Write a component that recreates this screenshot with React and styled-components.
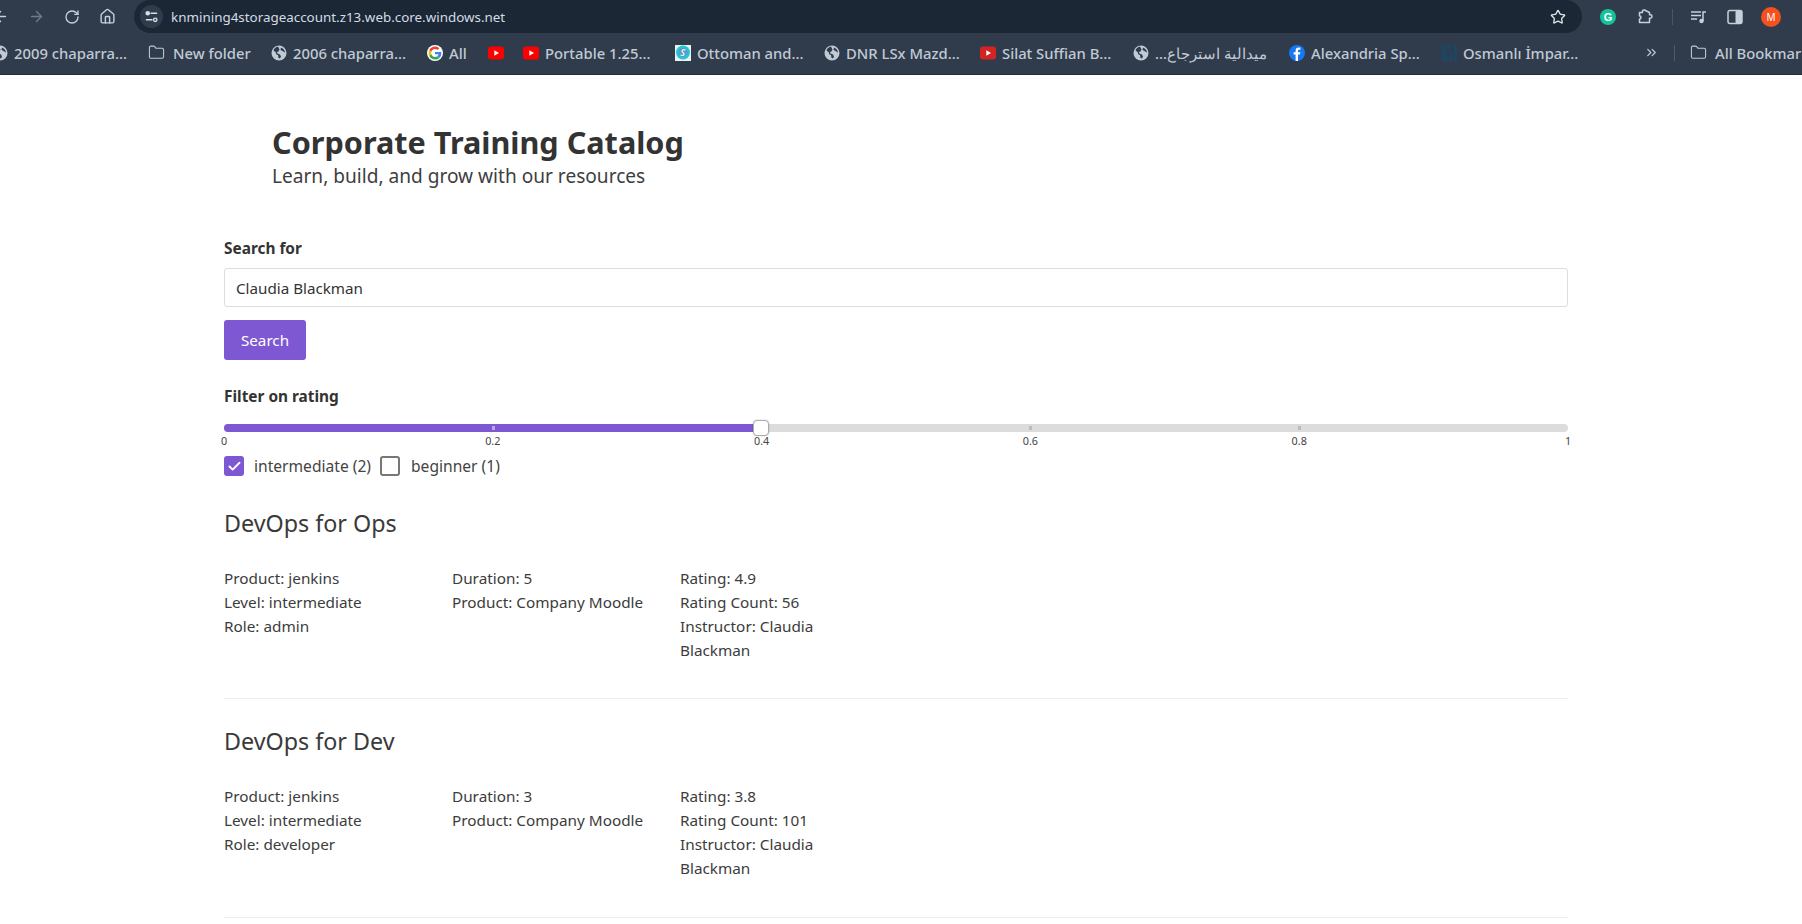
import React from "react";
import styled, { createGlobalStyle } from "styled-components";
import { ArrowLeft, ArrowRight, RotateCw, Home, Star, Folder, ChevronsRight, Check } from "lucide-react";

const Global = createGlobalStyle`
  html, body { margin: 0; padding: 0; background: #fff; }
  body { font-family: "Noto Sans", "Open Sans", sans-serif; color: #333; overflow: hidden; }
  * { box-sizing: border-box; }
`;

const Page = styled.div`width: 1802px; height: 924px; overflow: hidden;`;
const Toolbar = styled.div`
  height: 33px; background: #303c4c; display: flex; align-items: flex-start; color: #c6d0db;
`;
const NavIcons = styled.div`display: flex; align-items: center; gap: 19px; height: 33px; width: 142px; margin-left: -8px; flex: none;`;
const NavButton = styled.span`display: flex; color: ${p => p.$dim ? "#6f7a87" : "#c6d0db"};`;
const AddressBar = styled.div`
  width: 1448px; height: 33px; background: #1b2735; display: flex; align-items: center; flex: none;
  border-radius: 17px; padding-right: 16px;
`;
const SiteIcon = styled.span`
  width: 23px; height: 23px; border-radius: 50%; background: #303c4c; margin: 0 8px 0 6px; display: flex; align-items: center; justify-content: center; color: #d8dfe6;
`;
const Url = styled.span`font: 13.400px "Noto Sans", sans-serif; color: #d3dce5; flex: 1;`;
const ToolIcons = styled.div`display: flex; align-items: center; height: 33px; flex: 1; padding-left: 18px; color: #c6d0db;`;
const GrammarlyBadge = styled.span`
  width: 16px; height: 16px; border-radius: 50%; background: #15c39a; color: #fff; font: bold 11px "Liberation Sans", sans-serif;
  display: flex; align-items: center; justify-content: center; margin-right: 21px;
`;
const ToolDivider = styled.span`width: 1px; height: 16px; background: #4b5665; margin: 0 18px 0 18px;`;
const PanelSlot = styled.span`display: flex; margin: 0 18px 0 20px;`;
const Avatar = styled.span`
  width: 20px; height: 20px; border-radius: 50%; background: #f4511e; color: #fff; font: 10px "Noto Sans", sans-serif;
  display: flex; align-items: center; justify-content: center;
`;
const Bookmarks = styled.div`
  height: 42px; background: #303c4c; display: flex; align-items: center; overflow: hidden; padding-bottom: 2px; border-bottom: 1px solid #262c35;
`;
const BookmarkRow = styled.div`display: flex; align-items: center; margin-left: -8px;`;
const Bookmark = styled.div`
  width: ${p => p.$w}px; flex: none; display: flex; align-items: center; gap: ${p => p.$gap ?? 6}px; color: #c0cad5; font: 500 14.800px "Noto Sans", sans-serif; white-space: nowrap; overflow: hidden;
`;
const BookmarkDivider = styled.span`width: 1px; height: 16px; background: #505b6a; margin-right: 15px; flex: none;`;

const Main = styled.main`width: 1344px; margin-left: 224px;`;
const Hero = styled.header`padding: 49px 0 0 48px; height: 147px;`;
const Title = styled.h1`margin: 0 0 3px; font: 700 30.600px/36px "Noto Sans", sans-serif; color: #333;`;
const Subtitle = styled.p`margin: 0; font: 400 19.100px/26px "Noto Sans", sans-serif; color: #3e3e3e;`;
const FieldLabel = styled.label`display: block; font: 700 15.400px/24px "Noto Sans", sans-serif; color: #333;`;
const SearchBlock = styled.section`padding-top: 15px;`;
const SearchInput = styled.input`
  display: block; width: 100%; height: 39px; margin-top: 7px; border: 1px solid #ddd; border-radius: 3px; padding: 0 11px;
  font: 15.200px "Noto Sans", sans-serif; color: #333; background: #fff; outline: none;
`;
const SearchButton = styled.button`
  display: block; width: 82px; height: 40px; margin-top: 13px; border: 0; border-radius: 3px; background: #7e57d3; color: #fff;
  font: 15.200px "Noto Sans", sans-serif;
`;
const FilterBlock = styled.section`padding-top: 25px;`;
const SliderWrap = styled.div`position: relative; height: 38px; margin-top: 7px;`;
const Track = styled.div`position: absolute; left: 0; right: 0; top: 8px; height: 8px; border-radius: 4px; background: #dcdcdc;`;
const Fill = styled.div`position: absolute; left: 0; top: 8px; height: 8px; border-radius: 4px 0 0 4px; background: #7e57d3;`;
const Dot = styled.span`position: absolute; top: 10px; width: 3px; height: 4px; margin-left: -1px; background: ${p => p.$c};`;
const Handle = styled.span`
  position: absolute; top: 4px; width: 16px; height: 16px; margin-left: -9px; border-radius: 4px; background: #fff; border: 1px solid #aaa; box-shadow: 0 0 2px rgba(0,0,0,.2);
`;
const Tick = styled.span`
  position: absolute; top: 18px; font: 10.800px/13px "Noto Sans", sans-serif; color: #444; transform: translateX(-50%);
`;
const Checks = styled.div`display: flex; align-items: center; height: 24px; font: 15.600px/24px "Noto Sans", sans-serif; color: #444;`;
const CheckBox = styled.span`
  width: 20px; height: 20px; flex: none; border-radius: 3px; display: flex; align-items: center; justify-content: center; color: #fff;
  background: ${p => p.$on ? "#7e57d3" : "#fff"}; border: ${p => p.$on ? "0" : "2px solid #777"}; margin-right: ${p => p.$gap}px;
`;
const CheckLabel = styled.span`margin-right: 9px;`;
const Result = styled.article`
  height: ${p => p.$h}px; padding-top: ${p => p.$pad}px; border-bottom: 1px solid #eee;
`;
const ResultTitle = styled.h2`margin: 0 0 27px; font: 400 23.300px/32px "Noto Sans", sans-serif; color: #3a3a3a;`;
const Columns = styled.div`display: grid; grid-template-columns: repeat(3, 228px);`;
const Column = styled.div`padding-right: 32px; font: 15.300px/24px "Noto Sans", sans-serif; color: #3c3c3c;`;
const Line = styled.div``;

const TuneIcon = () => (
  <svg width="15" height="15" viewBox="0 0 16 16" fill="none" stroke="currentColor" strokeWidth="1.500">
    <circle cx="4" cy="4.500" r="1.700" fill="currentColor" />
    <path d="M7 4.500h7M2 11.500h7" />
    <circle cx="12" cy="11.500" r="1.800" />
  </svg>
);
const GlobeIcon = () => (
  <svg width="16" height="16" viewBox="0 0 16 16">
    <circle cx="8" cy="8" r="7.500" fill="#c0cad5" />
    <path d="M7 1.500C5 2 3 3.500 2.500 5.500l2 1.500 1 2.500 1.500.5.500 3 1.500.5 1-2-1-2-2.500-1-.5-1.500 1.500-.5 1-2zM10 2.500l-.5 2.500 2 1 1.500 1 1 .5c0-2-1.500-4-4-5z" fill="#303c4c" />
  </svg>
);
const PuzzleIcon = () => (
  <svg width="17" height="17" viewBox="0 0 17 17" fill="none" stroke="currentColor" strokeWidth="1.500" strokeLinejoin="round">
    <path d="M2.500 4.500H5.500V3a1.500 1.500 0 0 1 2-1l5 2.500v2.300h.8a1.700 1.700 0 0 1 0 3.400h-.8v4.300H2.500v-3.500c1.200 0 1.500-.8 1.500-1.500S3.700 8 2.500 8z" />
  </svg>
);
const QueueIcon = () => (
  <svg width="16" height="16" viewBox="0 0 16 16" fill="none" stroke="currentColor" strokeWidth="1.500">
    <path d="M0 3h10M0 6.500h10M0 10h6" />
    <circle cx="10.500" cy="12" r="2.200" fill="currentColor" stroke="none" />
    <path d="M12 12V3h3" />
  </svg>
);
const SidePanelIcon = () => (
  <svg width="16" height="16" viewBox="0 0 16 16">
    <rect x="1" y="1.500" width="14" height="13" rx="2" fill="none" stroke="currentColor" strokeWidth="1.500" />
    <rect x="8.500" y="1.500" width="6.500" height="13" rx="1.500" fill="currentColor" />
  </svg>
);
const GoogleIcon = () => (
  <svg width="16" height="16" viewBox="0 0 48 48">
    <circle cx="24" cy="24" r="24" fill="#fff" />
    <path fill="#EA4335" d="M24 12c3 0 5.500 1 7.500 3l5.500-5.500C33.700 6.300 29.200 4.500 24 4.500 16.500 4.500 10 8.800 6.800 15l6.400 5C14.700 15.300 19 12 24 12z" />
    <path fill="#4285F4" d="M43 24.400c0-1.300-.1-2.500-.3-3.700H24v7.400h10.700c-.5 2.400-1.800 4.400-3.800 5.800l6.200 4.800C40.700 35.400 43 30.400 43 24.400z" />
    <path fill="#FBBC05" d="M13.200 28c-.4-1.200-.6-2.600-.6-4s.2-2.800.6-4l-6.400-5C5.400 17.700 4.700 20.800 4.700 24s.7 6.300 2.100 9z" />
    <path fill="#34A853" d="M24 43.500c5.200 0 9.600-1.700 12.900-4.700l-6.200-4.800c-1.700 1.200-4 1.900-6.700 1.900-5 0-9.300-3.300-10.800-8l-6.400 5C10 39.200 16.500 43.500 24 43.500z" />
  </svg>
);
const YouTubeIcon = ({ dark }) => (
  <svg width="16" height="16" viewBox="0 0 16 16">
    <rect x="0" y="1.500" width="16" height="13" rx="3" fill={dark ? "#d32424" : "#f00"} />
    <path d="M6.300 5.300 11 8l-4.700 2.700z" fill="#fff" />
  </svg>
);
const OttomanIcon = () => (
  <svg width="16" height="16" viewBox="0 0 16 16">
    <rect width="16" height="16" fill="#e8f4ee" />
    <circle cx="8" cy="7.500" r="7" fill="#23c6d6" />
    <circle cx="8" cy="7.500" r="4.600" fill="#5a9bc9" />
    <path d="M10.500 5.200C8 4 5.700 5.500 8 7.500s.5 3.700-2.500 2.500" stroke="#e8f4ee" strokeWidth="1.300" fill="none" />
  </svg>
);
const FacebookIcon = () => (
  <svg width="16" height="16" viewBox="0 0 16 16">
    <circle cx="8" cy="8" r="8" fill="#1877f2" />
    <path d="M9 16V9.500h2l.4-2.300H9V6c0-.7.300-1.200 1.300-1.200h1.100V2.800C11 2.700 10.400 2.600 9.700 2.600 7.800 2.600 6.600 3.800 6.600 5.700v1.500H4.600v2.300h2V16z" fill="#fff" />
  </svg>
);
const OsmanliIcon = () => (
  <svg width="16" height="16" viewBox="0 0 16 16">
    <rect width="16" height="16" fill="#1f4560" />
    <path d="M5 1 8 12l1-6 3-5v14" stroke="#2f3c4c" strokeWidth="1.600" fill="none" />
  </svg>
);

const courses = [
  { title: "DevOps for Ops", role: "admin", duration: 5, rating: 4.9, count: 56, h: 221, pad: 29 },
  { title: "DevOps for Dev", role: "developer", duration: 3, rating: 3.8, count: 101, h: 219, pad: 26 },
];

const ticks = [0, 0.2, 0.4, 0.6, 0.8, 1];

export default function App() {
  return (
    <Page>
      <Global />
      <Toolbar>
        <NavIcons>
          <NavButton><ArrowLeft size={17} /></NavButton>
          <NavButton $dim><ArrowRight size={17} /></NavButton>
          <NavButton><RotateCw size={16} /></NavButton>
          <NavButton><Home size={17} /></NavButton>
        </NavIcons>
        <AddressBar>
          <SiteIcon><TuneIcon /></SiteIcon>
          <Url>knmining4storageaccount.z13.web.core.windows.net</Url>
          <Star size={16} color="#dfe5ea" />
        </AddressBar>
        <ToolIcons>
          <GrammarlyBadge>G</GrammarlyBadge>
          <PuzzleIcon />
          <ToolDivider />
          <QueueIcon />
          <PanelSlot><SidePanelIcon /></PanelSlot>
          <Avatar>M</Avatar>
        </ToolIcons>
      </Toolbar>
      <Bookmarks>
        <BookmarkRow>
          <Bookmark $w={156}><GlobeIcon /><span>2009 chaparra...</span></Bookmark>
          <Bookmark $w={123} $gap={8}><Folder size={17} strokeWidth={1.500} /><span>New folder</span></Bookmark>
          <Bookmark $w={156}><GlobeIcon /><span>2006 chaparra...</span></Bookmark>
          <Bookmark $w={61}><GoogleIcon /><span>All</span></Bookmark>
          <Bookmark $w={35}><YouTubeIcon /></Bookmark>
          <Bookmark $w={152}><YouTubeIcon /><span>Portable 1.25...</span></Bookmark>
          <Bookmark $w={149}><OttomanIcon /><span>Ottoman and...</span></Bookmark>
          <Bookmark $w={156}><GlobeIcon /><span>DNR LSx Mazd...</span></Bookmark>
          <Bookmark $w={153}><YouTubeIcon dark /><span>Silat Suffian B...</span></Bookmark>
          <Bookmark $w={156}><GlobeIcon /><span dir="rtl">ميدالية استرجاع...</span></Bookmark>
          <Bookmark $w={152}><FacebookIcon /><span>Alexandria Sp...</span></Bookmark>
          <Bookmark $w={203}><OsmanliIcon /><span>Osmanlı İmpar...</span></Bookmark>
          <Bookmark $w={30}><ChevronsRight size={15} /></Bookmark>
          <BookmarkDivider />
          <Bookmark $w={140} $gap={8}><Folder size={17} strokeWidth={1.500} /><span>All Bookmarks</span></Bookmark>
        </BookmarkRow>
      </Bookmarks>
      <Main>
        <Hero>
          <Title>Corporate Training Catalog</Title>
          <Subtitle>Learn, build, and grow with our resources</Subtitle>
        </Hero>
        <SearchBlock>
          <FieldLabel>Search for</FieldLabel>
          <SearchInput readOnly value="Claudia Blackman" />
          <SearchButton>Search</SearchButton>
        </SearchBlock>
        <FilterBlock>
          <FieldLabel>Filter on rating</FieldLabel>
          <SliderWrap>
            <Track />
            <Fill style={{ width: "40%" }} />
            {ticks.slice(1, 5).map((t) => (
              <Dot key={t} $c={t === 0.4 ? "transparent" : t > 0.4 ? "#c4b8b8" : "#b7a9dc"} style={{ left: `${t * 100}%` }} />
            ))}
            <Handle style={{ left: "40%" }} />
            {ticks.map((t) => (
              <Tick key={t} style={{ left: `${t * 100}%` }}>{t}</Tick>
            ))}
          </SliderWrap>
          <Checks>
            <CheckBox $on $gap={10}><Check size={15} strokeWidth={3} /></CheckBox>
            <CheckLabel>intermediate (2)</CheckLabel>
            <CheckBox $gap={11} />
            <CheckLabel>beginner (1)</CheckLabel>
          </Checks>
        </FilterBlock>
        {courses.map((c) => (
          <Result key={c.title} $h={c.h} $pad={c.pad}>
            <ResultTitle>{c.title}</ResultTitle>
            <Columns>
              <Column>
                <Line>Product: jenkins</Line>
                <Line>Level: intermediate</Line>
                <Line>Role: {c.role}</Line>
              </Column>
              <Column>
                <Line>Duration: {c.duration}</Line>
                <Line>Product: Company Moodle</Line>
              </Column>
              <Column>
                <Line>Rating: {c.rating}</Line>
                <Line>Rating Count: {c.count}</Line>
                <Line>Instructor: Claudia Blackman</Line>
              </Column>
            </Columns>
          </Result>
        ))}
      </Main>
    </Page>
  );
}
